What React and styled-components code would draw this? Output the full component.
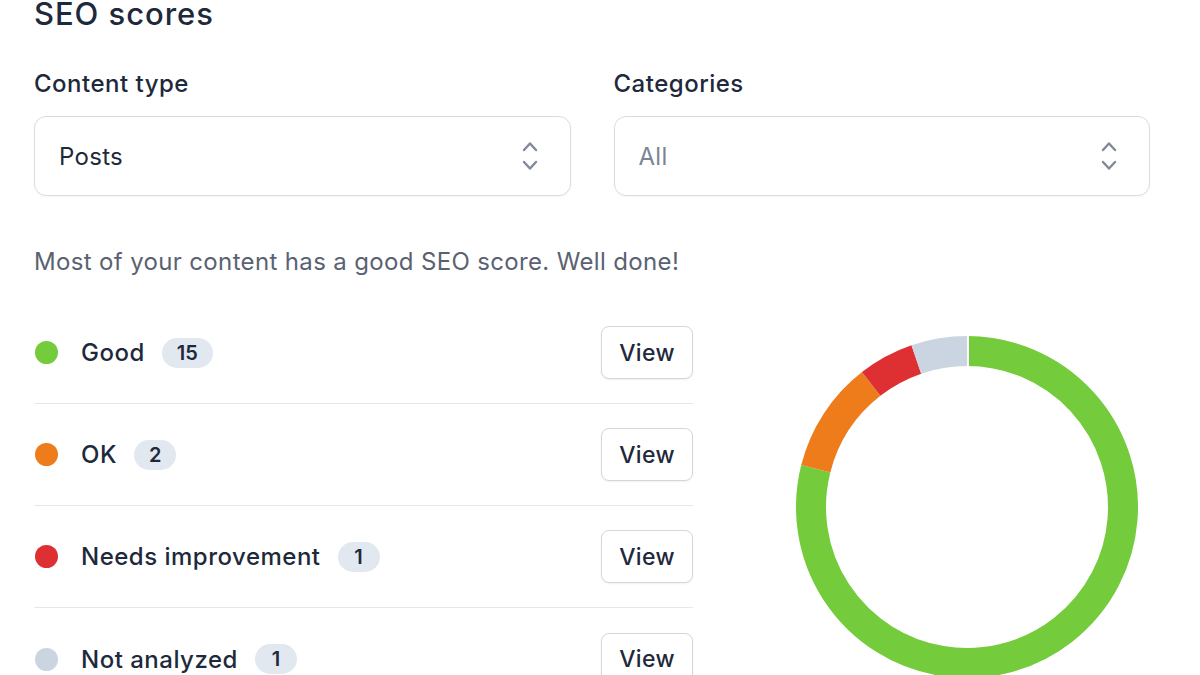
import React from "react";
import styled, { createGlobalStyle } from "styled-components";

const Global = createGlobalStyle`
  html, body { margin: 0; padding: 0; background: #fff; }
  body { width: 1200px; height: 675px; overflow: hidden; font-family: Inter, "Noto Sans", sans-serif; color: #1e293b; }
`;

const Page = styled.div`
  padding: 0 50px 0 34px;
`;

const Title = styled.h2`
  margin: 0;
  font-size: 31px;
  line-height: 28px;
  font-weight: 500;
  letter-spacing: 0.95px;
  color: #1e293b;
`;

const Filters = styled.div`
  display: grid;
  grid-template-columns: 1fr 1fr;
  column-gap: 43px;
  margin-top: 41px;
`;

const Field = styled.div`
  display: flex;
  flex-direction: column;
  gap: 17px;
`;

const Label = styled.label`
  font-size: 24px;
  line-height: 30px;
  font-weight: 500;
  letter-spacing: 0.5px;
  color: #1e293b;
`;

const Select = styled.div`
  height: 80px;
  box-sizing: border-box;
  border: 1.5px solid #d8dce2;
  border-radius: 12px;
  display: flex;
  align-items: center;
  justify-content: space-between;
  padding: 0 32px 0 24px;
  font-size: 24px;
  letter-spacing: 0.3px;
  color: ${(p) => (p.$placeholder ? "#7b8494" : "#1e293b")};
  box-shadow: 0 1px 2px rgba(0,0,0,0.04);
`;

const Summary = styled.p`
  margin: 51px 0 0;
  font-size: 24px;
  line-height: 30px;
  letter-spacing: 0.35px;
  color: #5a6272;
`;

const Body = styled.div`
  display: grid;
  grid-template-columns: 659px 1fr;
  margin-top: 25px;
`;

const List = styled.ul`
  list-style: none;
  margin: 0;
  padding: 0;
`;

const Row = styled.li`
  display: flex;
  align-items: center;
  height: 102px;
  box-sizing: border-box;
  border-bottom: 1.5px solid #e5e7eb;
  &:last-child { border-bottom: none; }
`;

const Dot = styled.span`
  width: 23px;
  height: 23px;
  border-radius: 50%;
  background: ${(p) => p.$color};
  margin: 0 23px 0 1px;
  flex-shrink: 0;
`;

const Name = styled.span`
  font-size: 24px;
  letter-spacing: 0.5px;
  color: #1e293b;
  font-weight: 500;
`;

const Badge = styled.span`
  margin-left: 17px;
  min-width: 42px;
  height: 30px;
  padding: 0 15px;
  box-sizing: border-box;
  border-radius: 15px;
  background: #e2e8f0;
  display: inline-flex;
  align-items: center;
  justify-content: center;
  font-size: 20px;
  font-weight: 600;
  color: #1e293b;
`;

const ViewButton = styled.button`
  margin-left: auto;
  width: 92px;
  height: 53px;
  border: 1.5px solid #d3d7dd;
  border-radius: 8px;
  background: #fff;
  font-family: inherit;
  font-size: 23px;
  letter-spacing: 0.3px;
  font-weight: 500;
  color: #1e293b;
  box-shadow: 0 1px 2px rgba(0,0,0,0.06);
`;

const ChartWrap = styled.div`
  display: flex;
  justify-content: flex-start;
  padding-top: 34px;
  padding-left: 103px;
`;

const Chevrons = () => (
  <svg width="16" height="30" viewBox="0 0 16 30" fill="none" stroke="#808998" strokeWidth="2.4" strokeLinecap="round" strokeLinejoin="round">
    <path d="M2 9 L8 2.5 L14 9" />
    <path d="M2 21 L8 27.5 L14 21" />
  </svg>
);

const data = [
  { name: "Good", count: 15, color: "#74cb3b" },
  { name: "OK", count: 2, color: "#ee7c1b" },
  { name: "Needs improvement", count: 1, color: "#de2f33" },
  { name: "Not analyzed", count: 1, color: "#cbd5e1" },
];

const Donut = () => {
  const total = data.reduce((s, d) => s + d.count, 0);
  const r = 156;
  const cx = 171;
  const cy = 171;
  let start = 0;
  const arcs = data.map((d) => {
    const sweep = (d.count / total) * 360;
    const a0 = start;
    const a1 = start + sweep;
    start = a1;
    const p = (a) => {
      const rad = ((a - 90) * Math.PI) / 180;
      return [cx + r * Math.cos(rad), cy + r * Math.sin(rad)];
    };
    const [x0, y0] = p(a0);
    const [x1, y1] = p(a1);
    const large = sweep > 180 ? 1 : 0;
    return (
      <path
        key={d.name}
        d={`M${x0} ${y0} A${r} ${r} 0 ${large} 1 ${x1} ${y1}`}
        stroke={d.color}
        strokeWidth="30"
        fill="none"
      />
    );
  });
  return (
    <svg width="342" height="342" viewBox="0 0 342 342">
      {arcs}
      <line x1={cx + 1} y1={cy - r - 16} x2={cx + 1} y2={cy - r + 16} stroke="#fff" strokeWidth="2" />
    </svg>
  );
};

export default function App() {
  return (
    <>
      <Global />
      <Page>
        <Title>SEO scores</Title>
        <Filters>
          <Field>
            <Label>Content type</Label>
            <Select>
              <span>Posts</span>
              <Chevrons />
            </Select>
          </Field>
          <Field>
            <Label>Categories</Label>
            <Select $placeholder>
              <span>All</span>
              <Chevrons />
            </Select>
          </Field>
        </Filters>
        <Summary>Most of your content has a good SEO score. Well done!</Summary>
        <Body>
          <List>
            {data.map((d) => (
              <Row key={d.name}>
                <Dot $color={d.color} />
                <Name>{d.name}</Name>
                <Badge>{d.count}</Badge>
                <ViewButton>View</ViewButton>
              </Row>
            ))}
          </List>
          <ChartWrap>
            <Donut />
          </ChartWrap>
        </Body>
      </Page>
    </>
  );
}
